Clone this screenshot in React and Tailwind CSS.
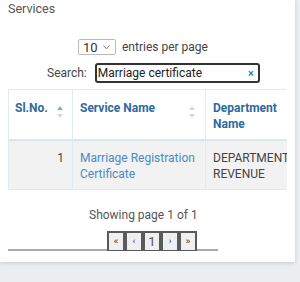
import React from 'react'

const SortIcon = ({ active }) => (
  <svg width="6" height="12" viewBox="0 0 6 12" className="shrink-0">
    <path d="M3 0 L6 4 L0 4 Z" fill={active ? '#8fa7bd' : '#d3d8dc'} />
    <path d="M3 12 L6 8 L0 8 Z" fill="#d3d8dc" />
  </svg>
)

const PageButton = ({ children, big }) => (
  <button
    className={`relative z-10 w-[18px] h-[21px] flex items-center justify-center bg-[#efefef] border-2 border-[#5a5a5a] text-[#555] ${
      big ? 'text-[13px]' : 'text-[9px] font-bold'
    }`}
  >
    {children}
  </button>
)

export default function App() {
  return (
    <div className="h-[282px] w-[300px] bg-[#eaeef1] overflow-hidden" style={{ fontFamily: 'Roboto, "Liberation Sans", sans-serif' }}>
      <div className="w-[295px] h-[262px] bg-white shadow-[0_1px_4px_rgba(0,0,0,0.15)] flex flex-col">
        <div className="pl-2 pt-[1px] text-[12.5px] leading-4 text-[#555]">Services</div>

        <div className="flex items-center mt-[21px] pl-[78px] text-[12px] text-[#444]">
          <div className="w-[38px] h-[16px] border border-[#bbb] rounded-[2px] flex items-center justify-between pl-[4px] pr-[5px] text-[13px] leading-none text-[#333]">
            <span>10</span>
            <svg width="7" height="5" viewBox="0 0 7 5">
              <path d="M0.5 0.5 L3.5 3.8 L6.5 0.5" fill="none" stroke="#777" strokeWidth="1" />
            </svg>
          </div>
          <span className="ml-[6px]">entries per page</span>
        </div>

        <div className="flex items-center mt-[7px] pl-[47px] text-[12px] text-[#444]">
          <span>Search:</span>
          <div className="ml-[8px] w-[165px] h-[20px] border-2 border-[#333] rounded-[3px] flex items-center justify-between pl-[1px] pr-[4px] text-[#222]">
            <span>Marriage certificate</span>
            <span className="text-[#3b7fb6] text-[11px] font-bold leading-none">×</span>
          </div>
        </div>

        <div className="ml-2 mt-[6px] w-[279px] overflow-hidden">
          <table className="w-[370px] border-collapse text-[12px] leading-[16px] table-fixed">
            <colgroup>
              <col className="w-[64px]" />
              <col className="w-[133px]" />
              <col className="w-[173px]" />
            </colgroup>
            <thead>
              <tr className="h-[50px] align-top text-[#2d6aa0] font-bold">
                <th className="border border-[#e1ebf1] pl-[6px] pr-[9px] pt-[10px] text-left">
                  <div className="flex justify-between">
                    <span>Sl.No.</span>
                    <span className="pt-[6px]"><SortIcon active /></span>
                  </div>
                </th>
                <th className="border border-[#e1ebf1] pl-[7px] pr-[10px] pt-[10px] text-left">
                  <div className="flex justify-between">
                    <span>Service Name</span>
                    <span className="pt-[6px]"><SortIcon /></span>
                  </div>
                </th>
                <th className="border border-[#e1ebf1] pl-[7px] pt-[10px] text-left">
                  Department<br />Name
                </th>
              </tr>
            </thead>
            <tbody>
              <tr className="h-[50px] align-top bg-[#f2f2f2] border-t-2 border-t-[#dbe8f1]">
                <td className="border border-[#e1ebf1] pr-[8px] pt-[9px] text-right text-[#444]">1</td>
                <td className="border border-[#e1ebf1] pl-[7px] pt-[9px] text-[#4a8bc2]">
                  Marriage Registration Certificate
                </td>
                <td className="border border-[#e1ebf1] pl-[7px] pt-[9px] text-[#444]">
                  DEPARTMENT<br />REVENUE
                </td>
              </tr>
            </tbody>
          </table>

          <div className="mt-[17px] pl-[81px] text-[12px] leading-4 text-[#555]">Showing page 1 of 1</div>

          <div className="mt-[8px] flex pl-[99px]">
            <PageButton>«</PageButton>
            <PageButton>‹</PageButton>
            <PageButton big>1</PageButton>
            <PageButton>›</PageButton>
            <PageButton>»</PageButton>
          </div>
          <div className="-mt-[3px] w-[210px] h-[2px] bg-[#a9a9a9]" />
        </div>
      </div>
    </div>
  )
}
